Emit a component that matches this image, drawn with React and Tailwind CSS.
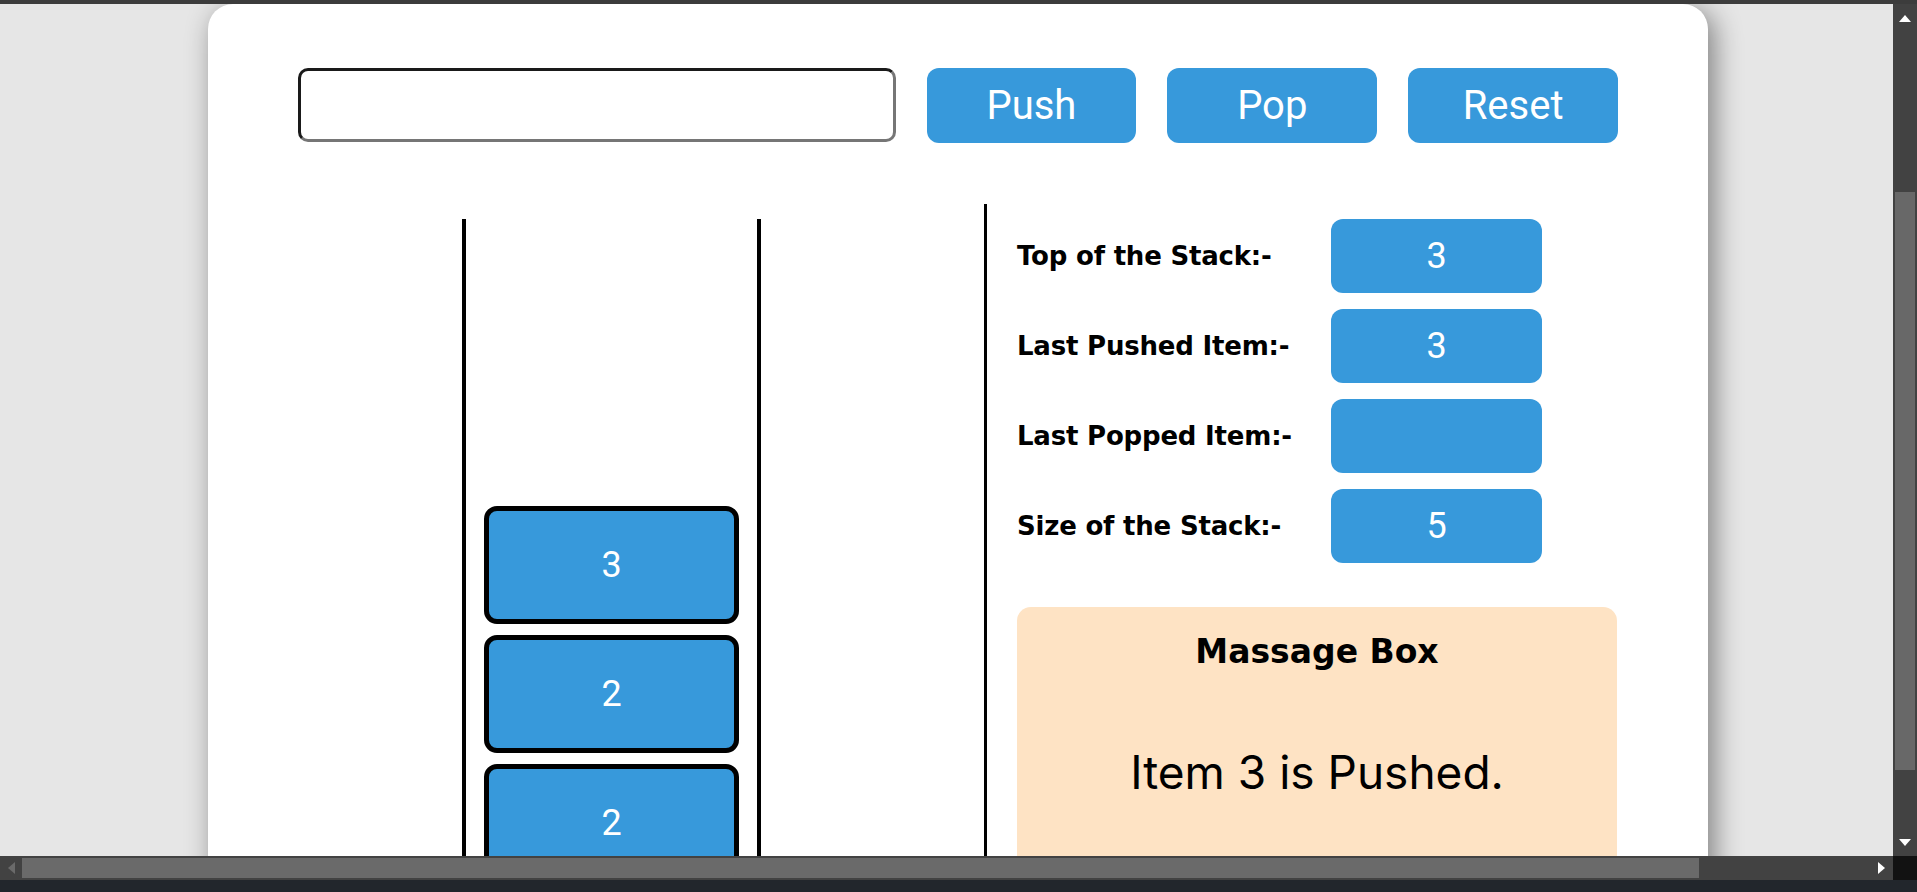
import React from "react";

const stack = ["3", "2", "2", "1", "0"];

const info = [
  ["Top of the Stack:-", "3"],
  ["Last Pushed Item:-", "3"],
  ["Last Popped Item:-", ""],
  ["Size of the Stack:-", "5"],
];

function Btn({ children }) {
  return (
    <button className="w-[210px] h-[75px] rounded-[12px] bg-[#3799db] text-white text-[40px] font-['Roboto',sans-serif]">
      {children}
    </button>
  );
}

export default function App() {
  return (
    <div className="h-screen w-full overflow-hidden flex flex-col bg-[#3c3c3c] font-['Inter',sans-serif]">
      <div className="h-[4px] shrink-0" />
      <div className="flex flex-1 min-h-0">
        {/* page */}
        <div className="flex-1 bg-[#e6e6e6] overflow-hidden pl-[208px]">
          <div className="w-[1500px] h-[900px] bg-white rounded-t-[25px] shadow-[6px_6px_28px_rgba(0,0,0,0.45)] pt-[64px] px-[90px]">
            {/* controls */}
            <div className="flex gap-[31px]">
              <input className="w-[598px] h-[74px] rounded-[10px] border-[3px] border-t-[#1a1a1a] border-l-[#1a1a1a] border-r-[#767676] border-b-[#767676] outline-none" />
              <Btn>Push</Btn>
              <Btn>Pop</Btn>
              <Btn>Reset</Btn>
            </div>

            <div className="flex mt-[61px]">
              {/* stack */}
              <div className="w-[686px] pl-[164px] pt-[15px]">
                <div className="w-[299px] h-[700px] border-x-4 border-black pt-[287px] px-[18px] flex flex-col gap-[11px]">
                  {stack.map((v, i) => (
                    <div
                      key={i}
                      className="h-[118px] shrink-0 rounded-[13px] border-[5px] border-black bg-[#3799db] text-white text-[36px] font-['Roboto',sans-serif] flex items-center justify-center"
                    >
                      {v}
                    </div>
                  ))}
                </div>
              </div>

              {/* divider */}
              <div className="w-[3px] h-[700px] bg-black" />

              {/* info */}
              <div className="pl-[30px] pt-[15px]">
                <div className="flex flex-col gap-[16px]">
                  {info.map(([label, val]) => (
                    <div key={label} className="flex items-center">
                      <div className="w-[314px] text-[26px] font-bold text-black font-['DejaVu_Sans',sans-serif] tracking-[-0.2px]">{label}</div>
                      <div className="w-[211px] h-[74px] rounded-[12px] bg-[#3799db] text-white text-[36px] font-['Roboto',sans-serif] flex items-center justify-center">
                        {val}
                      </div>
                    </div>
                  ))}
                </div>
                <div className="mt-[44px] w-[600px] h-[300px] rounded-[14px] bg-[#fee3c4] pt-[25px] text-center">
                  <div className="text-[33px] leading-[40px] font-bold text-black font-['DejaVu_Sans',sans-serif]">Massage Box</div>
                  <div className="mt-[72px] text-[46px] leading-[56px] text-black">Item 3 is Pushed.</div>
                </div>
              </div>
            </div>
          </div>
        </div>

        {/* vertical scrollbar */}
        <div className="w-[24px] shrink-0 bg-[#424242] flex flex-col items-center">
          <div className="h-[28px] flex items-center justify-center">
            <svg width="12" height="7" viewBox="0 0 12 7"><path d="M6 0L12 7H0z" fill="#fff" /></svg>
          </div>
          <div className="flex-1 w-full px-[2px] pt-[160px] pb-[58px]">
            <div className="h-full bg-[#686868]" />
          </div>
          <div className="h-[28px] flex items-center justify-center">
            <svg width="12" height="7" viewBox="0 0 12 7"><path d="M0 0H12L6 7z" fill="#fff" /></svg>
          </div>
        </div>
      </div>

      {/* horizontal scrollbar */}
      <div className="h-[24px] shrink-0 flex bg-[#424242]">
        <div className="w-[22px] flex items-center justify-center">
          <svg width="7" height="12" viewBox="0 0 7 12"><path d="M7 0V12L0 6z" fill="#6a6a6a" /></svg>
        </div>
        <div className="w-[1677px] py-[2px]">
          <div className="h-full bg-[#6a6a6a]" />
        </div>
        <div className="flex-1 flex items-center justify-end pr-[8px]">
          <svg width="7" height="12" viewBox="0 0 7 12"><path d="M0 0V12L7 6z" fill="#fff" /></svg>
        </div>
        <div className="w-[24px] bg-[#121212]" />
      </div>

      {/* taskbar strip */}
      <div className="h-[12px] shrink-0 bg-[#22262c]" />
    </div>
  );
}
